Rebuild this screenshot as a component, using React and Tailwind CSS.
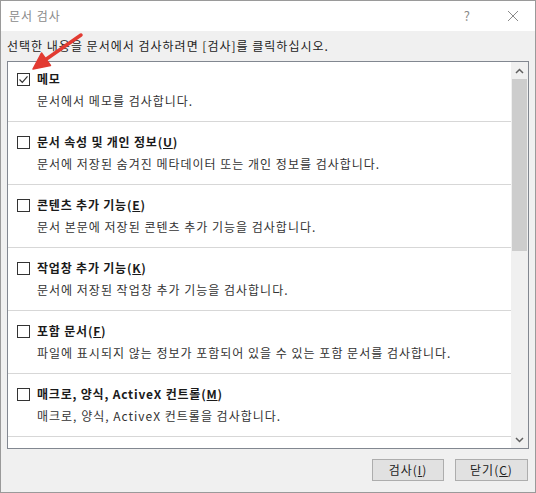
import React from 'react';

const items = [
  { title: '메모', key: null, desc: '문서에서 메모를 검사합니다.', checked: true },
  { title: '문서 속성 및 개인 정보', key: 'U', desc: '문서에 저장된 숨겨진 메타데이터 또는 개인 정보를 검사합니다.' },
  { title: '콘텐츠 추가 기능', key: 'E', desc: '문서 본문에 저장된 콘텐츠 추가 기능을 검사합니다.' },
  { title: '작업창 추가 기능', key: 'K', desc: '문서에 저장된 작업창 추가 기능을 검사합니다.' },
  { title: '포함 문서', key: 'F', desc: '파일에 표시되지 않는 정보가 포함되어 있을 수 있는 포함 문서를 검사합니다.' },
  { title: '매크로, 양식, ActiveX 컨트롤', key: 'M', desc: '매크로, 양식, ActiveX 컨트롤을 검사합니다.' },
];

const Checkbox = ({ checked }) => (
  <div className="w-[13px] h-[13px] border border-[#333] bg-white flex items-center justify-center shrink-0">
    {checked && (
      <svg width="11" height="11" viewBox="0 0 11 11">
        <path d="M1.5 5.5 L4.3 8.3 L9.5 2.3" fill="none" stroke="#333" strokeWidth="1.2" />
      </svg>
    )}
  </div>
);

const App = () => {
  return (
    <div
      className="relative w-[536px] h-[493px] bg-[#f0f0f0] border border-[#9a9a9a] flex flex-col text-[12px] tracking-[1px] text-[#1a1a1a]"
      style={{ fontFamily: '"Noto Sans CJK KR", "Noto Sans", sans-serif' }}
    >
      {/* title bar */}
      <div className="h-[30px] bg-white flex items-center justify-between pl-[8px] pr-[16px] shrink-0">
        <span className="text-[#8a8a8a] text-[12px]">문서 검사</span>
        <div className="flex items-center gap-[36px] text-[#8a8a8a]">
          <span className="text-[13px]">?</span>
          <svg width="12" height="12" viewBox="0 0 12 12">
            <path d="M1 1 L11 11 M11 1 L1 11" stroke="#8a8a8a" strokeWidth="1" />
          </svg>
        </div>
      </div>

      <div className="px-[6px] pt-[6px] leading-[18px] text-[#222]">
        선택한 내용을 문서에서 검사하려면 [검사]를 클릭하십시오.
      </div>

      {/* list box */}
      <div className="mx-[6px] mt-[6px] h-[388px] border border-[#828790] bg-white flex overflow-hidden">
        <div className="flex-1 overflow-hidden">
          <div className="mt-[-3px]">
            {items.map((it) => (
              <div key={it.title} className="pl-[9px] pt-[11px] pb-[11px] border-b border-[#d7d7d7]">
                <div className="flex items-center h-[18px]">
                  <Checkbox checked={it.checked} />
                  <span className="ml-[7px] font-bold tracking-[0.8px] text-[#1a1a1a]">
                    {it.title}
                    {it.key && (
                      <>
                        (<span className="underline">{it.key}</span>)
                      </>
                    )}
                  </span>
                </div>
                <div className="mt-[4px] ml-[20px] h-[18px] leading-[18px] text-[#333]">{it.desc}</div>
              </div>
            ))}
          </div>
        </div>
        {/* scrollbar */}
        <div className="w-[17px] bg-[#f0f0f0] flex flex-col">
          <div className="h-[17px] flex items-center justify-center">
            <svg width="9" height="6" viewBox="0 0 9 6">
              <path d="M1 5 L4.5 1.5 L8 5" fill="none" stroke="#606060" strokeWidth="1.5" />
            </svg>
          </div>
          <div className="h-[172px] bg-[#cdcdcd] mx-[1px]" />
          <div className="flex-1" />
          <div className="h-[17px] flex items-center justify-center">
            <svg width="9" height="6" viewBox="0 0 9 6">
              <path d="M1 1 L4.5 4.5 L8 1" fill="none" stroke="#606060" strokeWidth="1.5" />
            </svg>
          </div>
        </div>
      </div>

      {/* buttons */}
      <div className="flex justify-end gap-[11px] pr-[7px] mt-[10px]">
        <button className="w-[72px] h-[22px] bg-[#e1e1e1] border border-[#adadad] text-[#222] text-[12px] leading-none">
          검사(<span className="underline">I</span>)
        </button>
        <button className="w-[73px] h-[22px] bg-[#e1e1e1] border border-[#adadad] text-[#222] text-[12px] leading-none">
          닫기(<span className="underline">C</span>)
        </button>
      </div>

      {/* red pointer arrow */}
      <svg className="absolute left-0 top-0 pointer-events-none" width="100" height="80" viewBox="0 0 100 80">
        <path d="M80 34 L44 59" stroke="#e23b32" strokeWidth="3.5" strokeLinecap="round" />
        <path d="M32 68 L49.5 64.5 L40.5 52 Z" fill="#e23b32" stroke="#e23b32" strokeWidth="1.5" strokeLinejoin="round" />
      </svg>
    </div>
  );
};

export default App;
